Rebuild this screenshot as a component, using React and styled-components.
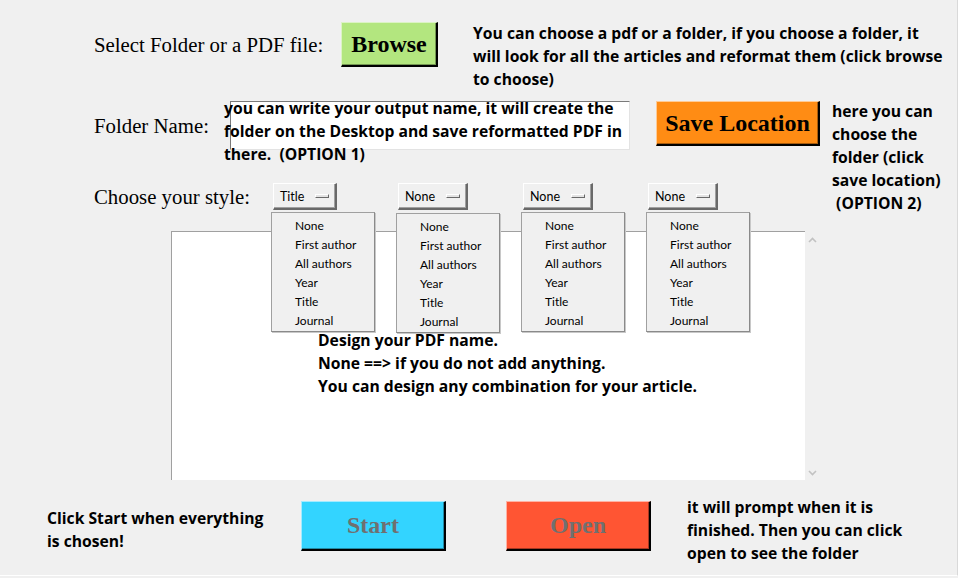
import React from "react";
import styled, { createGlobalStyle } from "styled-components";

const GlobalStyle = createGlobalStyle`
  html, body {
    margin: 0;
    padding: 0;
    background: #f0f0f0;
  }
`;

const Window = styled.div`
  width: 957px;
  height: 575px;
  background: #f0f0f0;
  border-right: 1px solid #d9d9d9;
  border-bottom: 1px solid #ffffff;
  overflow: hidden;
  display: flex;
  flex-direction: column;
`;

const Row = styled.div`
  display: flex;
  align-items: flex-start;
  height: ${(props) => props.height}px;
  padding-top: ${(props) => props.top || 0}px;
  padding-left: ${(props) => props.left || 0}px;
  box-sizing: border-box;
  flex-shrink: 0;
`;

const FieldLabel = styled.div`
  font-family: "Liberation Serif", "Times New Roman", serif;
  font-size: 20.8px;
  color: #000;
  width: ${(props) => props.width}px;
  line-height: ${(props) => props.lh}px;
  white-space: nowrap;
  flex-shrink: 0;
`;

const Note = styled.div`
  font-family: "Open Sans", Lato, sans-serif;
  font-weight: 700;
  font-size: 15.7px;
  line-height: 23px;
  color: #000;
  white-space: pre;
  flex-shrink: 0;
  margin-top: ${(props) => props.mt || 0}px;
  margin-left: ${(props) => props.ml || 0}px;
  width: ${(props) => (props.width ? `${props.width}px` : "auto")};
`;

const BigButton = styled.button`
  box-sizing: border-box;
  width: ${(props) => props.w}px;
  height: ${(props) => props.h}px;
  margin-left: ${(props) => props.ml || 0}px;
  background: ${(props) => props.bg};
  color: ${(props) => props.fg || "#000"};
  font-family: "Liberation Serif", "Times New Roman", serif;
  font-weight: 700;
  font-size: 24px;
  padding: 0;
  border-style: solid;
  border-width: 1px 2px 2px 1px;
  border-color: rgba(255, 255, 255, 0.55) #000 #000 rgba(255, 255, 255, 0.55);
  box-shadow: inset -1px -1px 0 rgba(0, 0, 0, 0.35);
  flex-shrink: 0;
  cursor: pointer;
`;

const EntryWrap = styled.div`
  position: relative;
  flex-shrink: 0;
`;

const Entry = styled.div`
  box-sizing: border-box;
  width: 400px;
  height: 49px;
  background: #fff;
  border-style: solid;
  border-width: 1px;
  border-color: #7a7a7a #e3e3e3 #e3e3e3 #7a7a7a;
`;

const EntryHint = styled(Note)`
  position: absolute;
  left: -6px;
  top: -4.5px;
`;

const Options = styled.div`
  display: flex;
  flex-shrink: 0;
`;

const OptionSlot = styled.div`
  position: relative;
  width: 125px;
`;

const OptionButton = styled.div`
  box-sizing: border-box;
  display: inline-flex;
  align-items: center;
  gap: 11px;
  height: 27px;
  padding: 0 6px;
  background: #f0f0f0;
  border-style: solid;
  border-width: 1px 2px 2px 1px;
  border-color: #fff #696969 #696969 #fff;
  box-shadow: inset -1px -1px 0 #a0a0a0;
  font-family: Lato, "Noto Sans", sans-serif;
  font-size: 12.5px;
  color: #000;
`;

const Indicator = styled.span`
  display: block;
  width: 14px;
  height: 4px;
  box-sizing: border-box;
  border-style: solid;
  border-width: 1px;
  border-color: #fff #696969 #696969 #fff;
  background: #e3e3e3;
`;

const Menu = styled.ul`
  position: absolute;
  left: -2px;
  top: ${(props) => props.top}px;
  z-index: 2;
  margin: 0;
  padding: 3px 0 0;
  list-style: none;
  box-sizing: border-box;
  width: 104px;
  height: 120px;
  background: #f0f0f0;
  border: 1px solid #a0a0a0;
  border-right-color: #8a8a8a;
  border-bottom-color: #8a8a8a;
  box-shadow: 1px 1px 0 #c8c8c8;
`;

const MenuItem = styled.li`
  padding-left: 23px;
  height: 19px;
  line-height: 19px;
  font-family: Lato, "Noto Sans", sans-serif;
  font-size: 12px;
  color: #000;
  white-space: nowrap;
`;

const TextArea = styled.div`
  display: flex;
  margin-left: 171px;
  height: 249px;
  flex-shrink: 0;
`;

const TextBody = styled.div`
  box-sizing: border-box;
  width: 634px;
  height: 249px;
  background: #fff;
  border-top: 1px solid #a0a0a0;
  border-left: 1px solid #a0a0a0;
  padding: 97px 0 0 146px;
`;

const ScrollBar = styled.div`
  width: 15px;
  display: flex;
  flex-direction: column;
  justify-content: space-between;
  align-items: center;
  padding: 6px 0 4px;
  box-sizing: border-box;
`;

const Arrow = ({ down }) => (
  <svg width="9" height="6" viewBox="0 0 9 6">
    <polyline
      points={down ? "1,1 4.5,4.5 8,1" : "1,5 4.5,1.5 8,5"}
      fill="none"
      stroke="#c2c2c2"
      strokeWidth="1.6"
    />
  </svg>
);

const items = ["None", "First author", "All authors", "Year", "Title", "Journal"];
const selections = [
  { value: "Title", menuTop: 29 },
  { value: "None", menuTop: 30 },
  { value: "None", menuTop: 29 },
  { value: "None", menuTop: 29 },
];

export default function App() {
  return (
    <>
      <GlobalStyle />
      <Window>
        <Row height={101} top={22} left={94}>
          <FieldLabel width={247} lh={46}>
            Select Folder or a PDF file:
          </FieldLabel>
          <BigButton w={97} h={45} bg="#b3e67f">
            Browse
          </BigButton>
          <Note ml={35} mt={-0.5}>
            {"You can choose a pdf or a folder, if you choose a folder, it\nwill look for all the articles and reformat them (click browse\nto choose)"}
          </Note>
        </Row>

        <Row height={82} left={94}>
          <FieldLabel width={136} lh={49}>
            Folder Name:
          </FieldLabel>
          <EntryWrap>
            <Entry />
            <EntryHint>
              {"you can write your output name, it will create the\nfolder on the Desktop and save reformatted PDF in\nthere.  (OPTION 1)"}
            </EntryHint>
          </EntryWrap>
          <BigButton w={164} h={45} ml={26} bg="#ff8c14">
            Save Location
          </BigButton>
          <Note ml={12} mt={-1.5}>
            {"here you can\nchoose the\nfolder (click\nsave location)\n (OPTION 2)"}
          </Note>
        </Row>

        <Row height={48} left={94}>
          <FieldLabel width={179} lh={27}>
            Choose your style:
          </FieldLabel>
          <Options>
            {selections.map((sel, i) => (
              <OptionSlot key={i}>
                <OptionButton>
                  {sel.value}
                  <Indicator />
                </OptionButton>
                <Menu top={sel.menuTop}>
                  {items.map((item) => (
                    <MenuItem key={item}>{item}</MenuItem>
                  ))}
                </Menu>
              </OptionSlot>
            ))}
          </Options>
        </Row>

        <TextArea>
          <TextBody>
            <Note>
              {"Design your PDF name.\nNone ==> if you do not add anything.\nYou can design any combination for your article."}
            </Note>
          </TextBody>
          <ScrollBar>
            <Arrow />
            <Arrow down />
          </ScrollBar>
        </TextArea>

        <Row height={95} top={21} left={47}>
          <Note width={254} mt={5.5}>
            {"Click Start when everything\nis chosen!"}
          </Note>
          <BigButton w={145} h={50} bg="#33d4ff" fg="#707070">
            Start
          </BigButton>
          <BigButton w={145} h={50} ml={60} bg="#ff5533" fg="#707070">
            Open
          </BigButton>
          <Note ml={36} mt={-5.5}>
            {"it will prompt when it is\nfinished. Then you can click\nopen to see the folder"}
          </Note>
        </Row>
      </Window>
    </>
  );
}
